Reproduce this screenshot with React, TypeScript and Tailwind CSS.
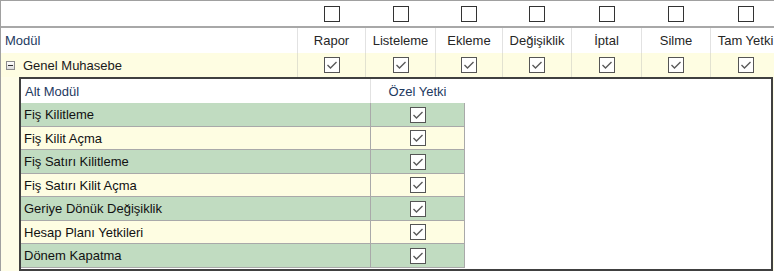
import React from 'react'

type Col = { label: string; width: string }

const columns: Col[] = [
  { label: 'Rapor', width: 'w-[68px]' },
  { label: 'Listeleme', width: 'w-[70px]' },
  { label: 'Ekleme', width: 'w-[67px]' },
  { label: 'Değişiklik', width: 'w-[69px]' },
  { label: 'İptal', width: 'w-[70px]' },
  { label: 'Silme', width: 'w-[69px]' },
  { label: 'Tam Yetki', width: 'w-[70px]' },
]

const subModules: Array<{ name: string; height: string; tone: 'green' | 'yellow' }> = [
  { name: 'Fiş Kilitleme', height: 'h-[24px]', tone: 'green' },
  { name: 'Fiş Kilit Açma', height: 'h-[23px]', tone: 'yellow' },
  { name: 'Fiş Satırı Kilitleme', height: 'h-[24px]', tone: 'green' },
  { name: 'Fiş Satırı Kilit Açma', height: 'h-[23px]', tone: 'yellow' },
  { name: 'Geriye Dönük Değişiklik', height: 'h-[24px]', tone: 'green' },
  { name: 'Hesap Planı Yetkileri', height: 'h-[23px]', tone: 'yellow' },
  { name: 'Dönem Kapatma', height: 'h-[24px]', tone: 'green' },
]

function CheckBox({ checked = false }: { checked?: boolean }) {
  return (
    <div className={`flex h-4 w-4 items-center justify-center border bg-white ${checked ? 'border-[#555555]' : 'border-[#333333]'}`}>
      {checked && (
        <svg width="14" height="14" viewBox="0 0 14 14">
          <polyline points="2.5,7 5.5,10 11.5,4" fill="none" stroke="#5a5a5a" strokeWidth="1.4" />
        </svg>
      )}
    </div>
  )
}

function MinusBox() {
  return (
    <div className="flex h-[9px] w-[9px] items-center justify-center border border-[#8c8c8c] bg-gradient-to-b from-white to-[#dcdcdc]">
      <div className="h-px w-[5px] bg-[#303030]" />
    </div>
  )
}

export default function App() {
  return (
    <div className="h-[271px] w-[774px] overflow-hidden border-l border-t border-[#a0a0a0] bg-white font-['Liberation_Sans',Arial,sans-serif] text-[13px] leading-none">
      {/* select-all row */}
      <div className="flex h-[27px] border-b-2 border-[#a8a8a8]">
        <div className="w-[296px] flex-none" />
        {columns.map((col, i) => (
          <div key={i} className={`${col.width} flex flex-none items-center justify-center border-l border-transparent`}>
            <CheckBox />
          </div>
        ))}
      </div>

      {/* column headers */}
      <div className="flex h-[25px]">
        <div className="flex w-[296px] flex-none items-center pl-1 text-[#1e3a5f]">Modül</div>
        {columns.map((col) => (
          <div key={col.label} className={`${col.width} flex flex-none items-center justify-center whitespace-nowrap border-l border-[#e2e2e2] text-[#262626]`}>
            {col.label}
          </div>
        ))}
      </div>

      {/* module row */}
      <div className="flex h-[24px] bg-[#fefde2]">
        <div className="flex w-[296px] flex-none items-center gap-2 pl-[5px] text-[#1a1a1a]">
          <MinusBox />
          <span>Genel Muhasebe</span>
        </div>
        {columns.map((col) => (
          <div key={col.label} className={`${col.width} flex flex-none items-center justify-center border-l border-[#e2e2d0]`}>
            <CheckBox checked />
          </div>
        ))}
      </div>

      {/* sub modules */}
      <div className="flex bg-[#fefde8]">
        <div className="w-[18px] flex-none" />
        <div className="flex h-[194px] w-[754px] flex-none flex-col border-2 border-[#404040] bg-white">
          <div className="flex h-[24px] flex-none">
            <div className="flex w-[350px] flex-none items-center border-r border-[#e2e2e2] pl-1 text-[#1e3a5f]">Alt Modül</div>
            <div className="flex w-[93px] flex-none items-center justify-center text-[#1e3a5f]">Özel Yetki</div>
          </div>
          {subModules.map((row) => (
            <div key={row.name} className={`flex ${row.height} w-[444px] flex-none border-b border-r border-[#a9a9a9] ${row.tone === 'green' ? 'bg-[#c1dcc1]' : 'bg-[#fefde2]'}`}>
              <div className="flex w-[350px] flex-none items-center border-r border-[#a9a9a9] pl-[3px] text-[#111111]">{row.name}</div>
              <div className="flex flex-1 items-center justify-center">
                <CheckBox checked />
              </div>
            </div>
          ))}
        </div>
      </div>
    </div>
  )
}
